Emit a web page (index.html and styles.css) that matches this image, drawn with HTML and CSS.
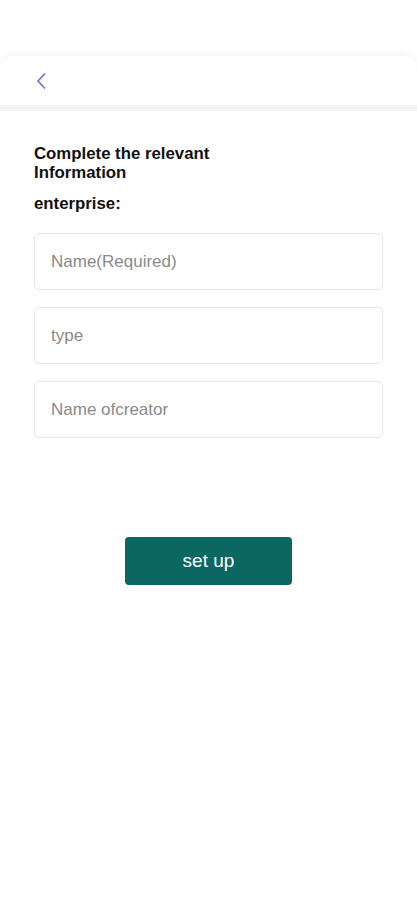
FILE: index.html
```html
<!DOCTYPE html>
<html>
<head>
<meta charset="utf-8">
<link rel="stylesheet" href="styles.css">
</head>
<body>
<div class="page">
  <header class="nav">
    <svg class="back" width="12" height="18" viewBox="0 0 12 18"><path d="M10 1.5 L3 9 L10 16.5" fill="none" stroke="#6a6fd0" stroke-width="1.6"/></svg>
  </header>
  <div class="band"></div>
  <main class="content">
    <h1 class="title">Complete the relevant<br>Information</h1>
    <div class="label">enterprise:</div>
    <div class="fields">
      <div class="field">Name(Required)</div>
      <div class="field">type</div>
      <div class="field">Name ofcreator</div>
    </div>
    <div class="actions">
      <button class="btn">set up</button>
    </div>
  </main>
</div>
</body>
</html>
```

FILE: styles.css
```css
* { box-sizing: border-box; }
html, body { margin: 0; padding: 0; background: #fff; }
body { font-family: "Liberation Sans", Arial, sans-serif; }
.page { padding-top: 56px; }
.nav {
  height: 49px;
  background: #fff;
  border-radius: 14px 14px 0 0;
  box-shadow: 0 -3px 6px rgba(0,0,0,0.04);
  display: flex;
  align-items: center;
  padding-left: 35px;
}
.back { display: block; margin-top: 0; }
.band { height: 6px; background: #f3f3f3; }
.content { padding: 33px 34px 0 34px; }
.title {
  margin: 0;
  font-size: 16.8px;
  font-weight: bold;
  line-height: 19px;
  color: #111;
}
.label {
  margin-top: 12px;
  font-size: 16.8px;
  font-weight: bold;
  color: #111;
  line-height: 19px;
}
.fields {
  margin-top: 20px;
  display: flex;
  flex-direction: column;
  gap: 17px;
}
.field {
  height: 57px;
  border: 1px solid #e6e6e6;
  border-radius: 5px;
  display: flex;
  align-items: center;
  padding-left: 16px;
  font-size: 17px;
  color: #8a8a8a;
}
.actions {
  margin-top: 99px;
  display: flex;
  justify-content: center;
}
.btn {
  width: 167px;
  height: 48px;
  border: none;
  border-radius: 4px;
  background: #0c6762;
  color: #fff;
  font-family: "Liberation Sans", Arial, sans-serif;
  font-size: 19px;
  padding: 0;
}
```
